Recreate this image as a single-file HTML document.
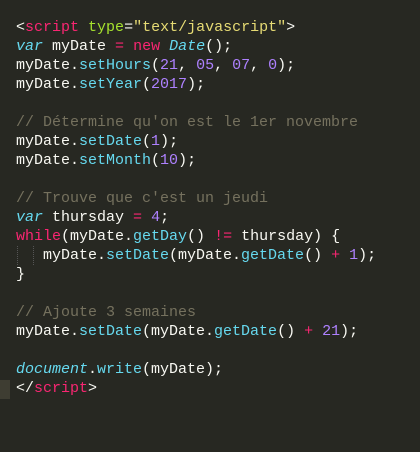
<!DOCTYPE html>
<html><head><style>
body{margin:0;width:420px;height:452px;background:#272822;overflow:hidden}
pre{margin:0;position:absolute;left:16px;top:18px;font-family:"Liberation Mono",monospace;font-size:15px;line-height:19px;color:#f8f8f2}
.p{color:#f92672}.g{color:#a6e22e}.y{color:#e6db74}.c{color:#66d9ef}.n{color:#ae81ff}.m{color:#75715e}.i{font-style:italic;color:#66d9ef}
.hl{position:absolute;left:0;top:380px;width:10px;height:19px;background:#3e3d32}
.gd{position:absolute;top:246px;height:19px;border-left:1px dotted #555}
</style></head><body>
<div class="hl"></div>
<div class="gd" style="left:17px"></div><div class="gd" style="left:33px"></div>
<pre>&lt;<span class="p">script</span> <span class="g">type</span>=<span class="y">"text/javascript"</span>&gt;
<span class="i">var</span> myDate <span class="p">=</span> <span class="p">new</span> <span class="i">Date</span>();
myDate.<span class="c">setHours</span>(<span class="n">21</span>, <span class="n">05</span>, <span class="n">07</span>, <span class="n">0</span>);
myDate.<span class="c">setYear</span>(<span class="n">2017</span>);

<span class="m">// Détermine qu'on est le 1er novembre</span>
myDate.<span class="c">setDate</span>(<span class="n">1</span>);
myDate.<span class="c">setMonth</span>(<span class="n">10</span>);

<span class="m">// Trouve que c'est un jeudi</span>
<span class="i">var</span> thursday <span class="p">=</span> <span class="n">4</span>;
<span class="p">while</span>(myDate.<span class="c">getDay</span>() <span class="p">!=</span> thursday) {
   myDate.<span class="c">setDate</span>(myDate.<span class="c">getDate</span>() <span class="p">+</span> <span class="n">1</span>);
}

<span class="m">// Ajoute 3 semaines</span>
myDate.<span class="c">setDate</span>(myDate.<span class="c">getDate</span>() <span class="p">+</span> <span class="n">21</span>);

<span class="i">document</span>.<span class="c">write</span>(myDate);
&lt;/<span class="p">script</span>&gt;</pre>
</body></html>
